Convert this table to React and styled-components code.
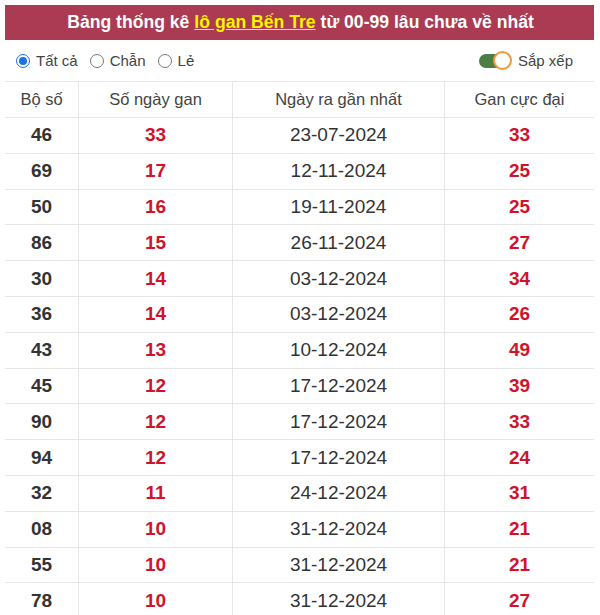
import { styled, createGlobalStyle } from "styled-components";

const GlobalStyle = createGlobalStyle`
  body {
    margin: 0;
    background: #fff;
    font-family: "Liberation Sans", Arial, sans-serif;
  }
`;

const rows = [
  ["46", "33", "23-07-2024", "33"],
  ["69", "17", "12-11-2024", "25"],
  ["50", "16", "19-11-2024", "25"],
  ["86", "15", "26-11-2024", "27"],
  ["30", "14", "03-12-2024", "34"],
  ["36", "14", "03-12-2024", "26"],
  ["43", "13", "10-12-2024", "49"],
  ["45", "12", "17-12-2024", "39"],
  ["90", "12", "17-12-2024", "33"],
  ["94", "12", "17-12-2024", "24"],
  ["32", "11", "24-12-2024", "31"],
  ["08", "10", "31-12-2024", "21"],
  ["55", "10", "31-12-2024", "21"],
  ["78", "10", "31-12-2024", "27"],
];

const Page = styled.div`
  padding: 5px 6px 0 5px;
`;

const Title = styled.div`
  height: 35px;
  background: #ab3b52;
  color: #fff;
  font-weight: bold;
  font-size: 17.6px;
  display: flex;
  align-items: center;
  justify-content: center;
  gap: 5px;
  padding-left: 2px;

  a {
    color: #fff200;
    text-decoration: underline;
  }
`;

const Options = styled.div`
  height: 41px;
  display: flex;
  align-items: center;
  padding: 0 0 0 11px;
  font-size: 15px;
  color: #444;
`;

const RadioGroup = styled.div`
  display: flex;
  align-items: center;
  gap: 12px;
  flex: 1;
`;

const RadioLabel = styled.label`
  display: flex;
  align-items: center;
  gap: 6px;
`;

const Radio = styled.span`
  width: 14px;
  height: 14px;
  border-radius: 50%;
  box-sizing: border-box;
  border: 1px solid ${(p) => (p.$on ? "#1a73e8" : "#777")};
  display: flex;
  align-items: center;
  justify-content: center;

  &::after {
    content: "";
    width: 8px;
    height: 8px;
    border-radius: 50%;
    background: ${(p) => (p.$on ? "#1a73e8" : "transparent")};
  }
`;

const Sort = styled.div`
  display: flex;
  align-items: center;
  gap: 9px;
  margin-right: 21px;
`;

const Track = styled.span`
  position: relative;
  width: 30px;
  height: 14px;
  border-radius: 7px;
  background: #4b7d45;
`;

const Knob = styled.span`
  position: absolute;
  right: -3px;
  top: -3px;
  width: 19px;
  height: 19px;
  box-sizing: border-box;
  border-radius: 50%;
  background: #fff;
  border: 2px solid #f09a3c;
`;

const Table = styled.div`
  display: grid;
  grid-template-columns: 73px 154px 212px 150px;
  border-top: 1px solid #e6e6e6;
`;

const Cell = styled.div`
  height: ${(p) => (p.$head ? "35px" : "34.8px")};
  display: flex;
  align-items: center;
  justify-content: center;
  border-bottom: 1px solid #e6e6e6;
  border-left: ${(p) => (p.$first ? "none" : "1px solid #e6e6e6")};
  font-size: ${(p) => (p.$head ? "16.5px" : "19px")};
  font-weight: ${(p) => (p.$bold ? "bold" : "normal")};
  color: ${(p) => (p.$red ? "#d0132b" : p.$head ? "#444" : "#333")};
`;

export default function App() {
  return (
    <Page>
      <GlobalStyle />
      <Title>
        <span>Bảng thống kê</span>
        <a>lô gan Bến Tre</a>
        <span>từ 00-99 lâu chưa về nhất</span>
      </Title>
      <Options>
        <RadioGroup>
          <RadioLabel>
            <Radio $on />
            Tất cả
          </RadioLabel>
          <RadioLabel>
            <Radio />
            Chẫn
          </RadioLabel>
          <RadioLabel>
            <Radio />
            Lẻ
          </RadioLabel>
        </RadioGroup>
        <Sort>
          <Track>
            <Knob />
          </Track>
          Sắp xếp
        </Sort>
      </Options>
      <Table>
        <Cell $head $first>Bộ số</Cell>
        <Cell $head>Số ngày gan</Cell>
        <Cell $head>Ngày ra gần nhất</Cell>
        <Cell $head>Gan cực đại</Cell>
        {rows.map((r, i) => [
          <Cell key={i + "a"} $first $bold>{r[0]}</Cell>,
          <Cell key={i + "b"} $bold $red>{r[1]}</Cell>,
          <Cell key={i + "c"}>{r[2]}</Cell>,
          <Cell key={i + "d"} $bold $red>{r[3]}</Cell>,
        ])}
      </Table>
    </Page>
  );
}
